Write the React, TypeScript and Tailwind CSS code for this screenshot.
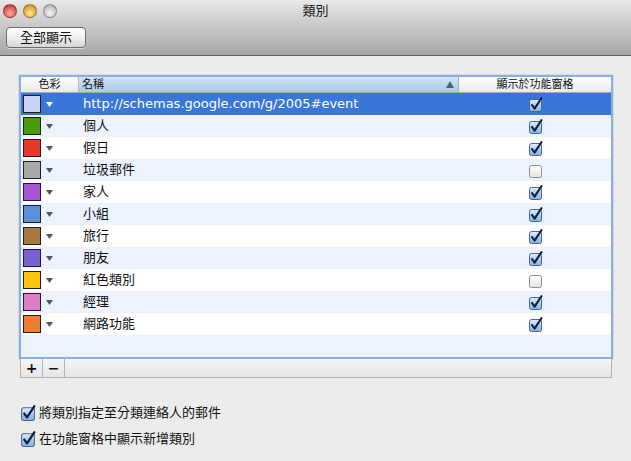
import React from 'react';

const rows = [
  { name: 'http://schemas.google.com/g/2005#event', color: '#c9d3fb', checked: true },
  { name: '個人', color: '#4b9b0d', checked: true },
  { name: '假日', color: '#e8372c', checked: true },
  { name: '垃圾郵件', color: '#a9a9a9', checked: false },
  { name: '家人', color: '#a654d5', checked: true },
  { name: '小組', color: '#5b8fd7', checked: true },
  { name: '旅行', color: '#a87741', checked: true },
  { name: '朋友', color: '#7a61d6', checked: true },
  { name: '紅色類別', color: '#fec40b', checked: false },
  { name: '經理', color: '#e07dca', checked: true },
  { name: '網路功能', color: '#ee7c2a', checked: true },
];

function Check({ checked, size = 13 }: { checked: boolean; size?: number }) {
  return (
    <svg width={size + 2} height={size + 2} viewBox="0 0 15 15">
      <defs>
        <linearGradient id="cbOn" x1="0" y1="0" x2="0" y2="1">
          <stop offset="0" stopColor="#e3efff" />
          <stop offset="0.5" stopColor="#a9cdf5" />
          <stop offset="1" stopColor="#7fb3ee" />
        </linearGradient>
        <linearGradient id="cbOff" x1="0" y1="0" x2="0" y2="1">
          <stop offset="0" stopColor="#ffffff" />
          <stop offset="1" stopColor="#e4e4e4" />
        </linearGradient>
      </defs>
      <rect x="1.5" y="2.5" width="12" height="12" rx="2" fill={checked ? 'url(#cbOn)' : 'url(#cbOff)'} stroke={checked ? '#51637e' : '#8f8f8f'} />
      {checked && (
        <path d="M4 8 L6.6 11.6 L13.4 1.2" fill="none" stroke="#0f1d3f" strokeWidth="2.1" strokeLinecap="round" strokeLinejoin="round" />
      )}
    </svg>
  );
}

function Light({ from, to }: { from: string; to: string }) {
  return (
    <div
      className="w-[14px] h-[14px] rounded-full border border-[rgba(0,0,0,0.3)]"
      style={{ background: `radial-gradient(circle at 50% 70%, ${from} 0%, ${to} 90%)` }}
    />
  );
}

export default function App() {
  const font = "font-['DejaVu_Sans','Noto_Sans_CJK_TC',sans-serif]";
  return (
    <div className={`w-[631px] h-[461px] bg-[#ececec] text-[#111] ${font} overflow-hidden`}>
      {/* title + toolbar */}
      <div className="relative h-[56px] border-b border-[#5c5c5c] bg-gradient-to-b from-[#e9e9e9] to-[#a6a6a6]">
        <div className="flex items-center gap-[6px] pl-[3px] pt-[4px]">
          <Light from="#ffb0a8" to="#c92d22" />
          <Light from="#ffe79a" to="#d58b10" />
          <Light from="#f4f4f4" to="#b0b0b0" />
        </div>
        <div className="absolute left-0 right-0 top-[3px] text-center text-[13px] leading-[16px]">類別</div>
        <div className="mt-[9px] ml-[6px] w-[80px] h-[21px] rounded-[4px] border border-[#6e6e6e] bg-gradient-to-b from-[#ffffff] via-[#f0f0f0] to-[#d6d6d6] flex items-center justify-center text-[13px] shadow-[0_1px_0_rgba(255,255,255,0.5)]">
          全部顯示
        </div>
      </div>

      {/* table */}
      <div className="ml-[19px] mt-[19px] w-[594px]">
        <div className="border-2 border-[#8bb0e0] shadow-[0_0_1px_#5a86c8]">
          {/* header */}
          <div className="flex h-[16px] text-[11px] leading-[15px] border-b border-[#a9a9a9]">
            <div className="w-[58px] text-center bg-gradient-to-b from-[#ffffff] to-[#e9e9e9] border-r border-[#bdbdbd]">色彩</div>
            <div className="w-[380px] relative pl-[3px] bg-gradient-to-b from-[#d5e5f8] to-[#a9c7ee] border-r border-[#9ab0cc]">
              名稱
              <svg className="absolute right-[4px] top-[4px]" width="8" height="7" viewBox="0 0 8 7">
                <path d="M4 0 L8 7 L0 7 Z" fill="#50607a" />
              </svg>
            </div>
            <div className="flex-1 text-center bg-gradient-to-b from-[#ffffff] to-[#e9e9e9]">顯示於功能窗格</div>
          </div>
          {/* rows */}
          {rows.map((r, i) => {
            const sel = i === 0;
            const bg = sel ? 'bg-[#3a76d8]' : i % 2 === 1 ? 'bg-[#edf3fe]' : 'bg-white';
            return (
              <div key={i} className={`flex h-[22px] items-center ${bg}`}>
                <div className="w-[58px] flex items-center pl-[2px]">
                  <div className="w-[18px] h-[18px] border border-[#1e1e1e]" style={{ background: r.color }} />
                  <svg className="ml-[5px]" width="7" height="5" viewBox="0 0 7 5">
                    <path d="M0 0 L7 0 L3.5 5 Z" fill={sel ? '#ffffff' : '#555'} />
                  </svg>
                </div>
                <div className={`w-[380px] pl-[4px] text-[13px] leading-[22px] ${sel ? 'text-white' : 'text-[#111]'} whitespace-nowrap`}>
                  {r.name}
                </div>
                <div className="flex-1 flex justify-center">
                  <Check checked={r.checked} />
                </div>
              </div>
            );
          })}
          <div className="h-[22px] bg-[#edf3fe]" />
        </div>
        {/* +/- bar */}
        <div className="flex h-[19px] mx-[1px] border border-t-0 border-[#b3b3b3] bg-gradient-to-b from-[#f6f6f6] to-[#e6e6e6]">
          <div className="w-[22px] border-r border-[#b3b3b3] flex items-center justify-center text-[14px] font-bold leading-none">+</div>
          <div className="w-[22px] border-r border-[#b3b3b3] flex items-center justify-center text-[14px] font-bold leading-none">−</div>
        </div>
      </div>

      {/* options */}
      <div className="mt-[27px] ml-[20px] flex flex-col gap-[11px] text-[13px]">
        <div className="flex items-center gap-[3px] h-[15px]">
          <Check checked size={14} />
          <span>將類別指定至分類連絡人的郵件</span>
        </div>
        <div className="flex items-center gap-[3px] h-[15px]">
          <Check checked size={14} />
          <span>在功能窗格中顯示新增類別</span>
        </div>
      </div>
    </div>
  );
}
